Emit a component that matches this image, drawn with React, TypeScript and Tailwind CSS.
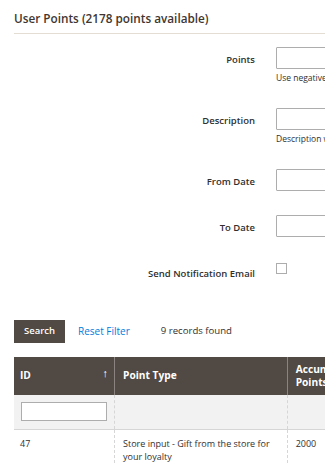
import React from "react";

const font = { fontFamily: '"Open Sans", "Liberation Sans", sans-serif' };

function Field({ label, hint, top }: { label: string; hint?: string; top: string }) {
  return (
    <div className={`flex items-start ${top}`}>
      <div className="h-[22px] w-[241px] shrink-0 pt-[4px] text-right text-[9.5px] font-semibold leading-[18px] text-[#303030]">
        {label}
      </div>
      <div className="ml-[21px] shrink-0">
        <div className="h-[22px] w-[200px] rounded-[1px] border border-[#adadad] bg-white" />
        {hint && (
          <div className="mt-[3px] whitespace-nowrap text-[8.5px] leading-[12px] text-[#303030]">{hint}</div>
        )}
      </div>
    </div>
  );
}

export default function App() {
  return (
    <div className="h-[464px] w-[325px] overflow-hidden bg-white text-[#303030]" style={font}>
      <div className="w-[500px] pl-[14px]">
        {/* Title */}
        <div className="flex h-[34px] items-center border-b border-[#e3ddd4] pt-[5px] text-[11.75px] font-semibold text-[#41362f]">
          User Points (2178 points available)
        </div>

        {/* Form */}
        <Field label="Points" hint="Use negative value to deduct points" top="mt-[13px]" />
        <Field label="Description" hint="Description will be shown to the customer" top="mt-[24px]" />
        <Field label="From Date" top="mt-[24px]" />
        <Field label="To Date" top="mt-[24px]" />
        <div className="mt-[24px] flex items-center">
          <div className="h-[22px] w-[241px] shrink-0 pt-[3px] text-right text-[9.5px] font-semibold leading-[19px] text-[#303030]">
            Send Notification Email
          </div>
          <div className="mb-[7px] ml-[21px] h-[11px] w-[11px] border border-[#adadad] bg-white" />
        </div>

        {/* Actions */}
        <div className="mt-[37px] flex items-center">
          <button className="h-[23px] w-[51px] bg-[#514943] text-[9.5px] font-semibold text-white">Search</button>
          <span className="ml-[13px] text-[10px] text-[#007bdb]">Reset Filter</span>
          <span className="ml-[31px] text-[9.6px] text-[#303030]">9 records found</span>
        </div>

        {/* Grid */}
        <table className="mt-[14px] w-[420px] border-collapse">
          <colgroup>
            <col className="w-[100px]" />
            <col className="w-[173px]" />
            <col className="w-[147px]" />
          </colgroup>
          <thead>
            <tr className="h-[38px] bg-[#514943] text-left text-white">
              <th className="relative border-r border-[#8a837f] px-[6px] text-[10.2px] font-bold">
                ID
                <span className="absolute right-[6px] top-[10px] text-[11px] font-normal leading-[12px]">↑</span>
              </th>
              <th className="border-r border-[#8a837f] px-[8px] text-[10.2px] font-bold">Point Type</th>
              <th className="px-[8px] text-[10.2px] font-bold leading-[13px]">
                Accumulated
                <br />
                Points
              </th>
            </tr>
          </thead>
          <tbody className="text-[9px]">
            <tr className="h-[34px] border-b border-[#d6d6d6] bg-[#f2f2f2]">
              <td className="border-r border-dashed border-[#d6d6d6] px-[7px]">
                <div className="h-[19px] w-[86px] border border-[#adadad] bg-white" />
              </td>
              <td className="border-r border-dashed border-[#d6d6d6]" />
              <td />
            </tr>
            <tr className="align-top">
              <td className="border-r border-dashed border-[#d6d6d6] px-[6px] pt-[7px] leading-[13px]">47</td>
              <td className="border-r border-dashed border-[#d6d6d6] px-[8px] pt-[7px] leading-[13px]">
                Store input - Gift from the store for your loyalty
              </td>
              <td className="px-[8px] pt-[7px] leading-[13px]">2000</td>
            </tr>
          </tbody>
        </table>
      </div>
    </div>
  );
}
